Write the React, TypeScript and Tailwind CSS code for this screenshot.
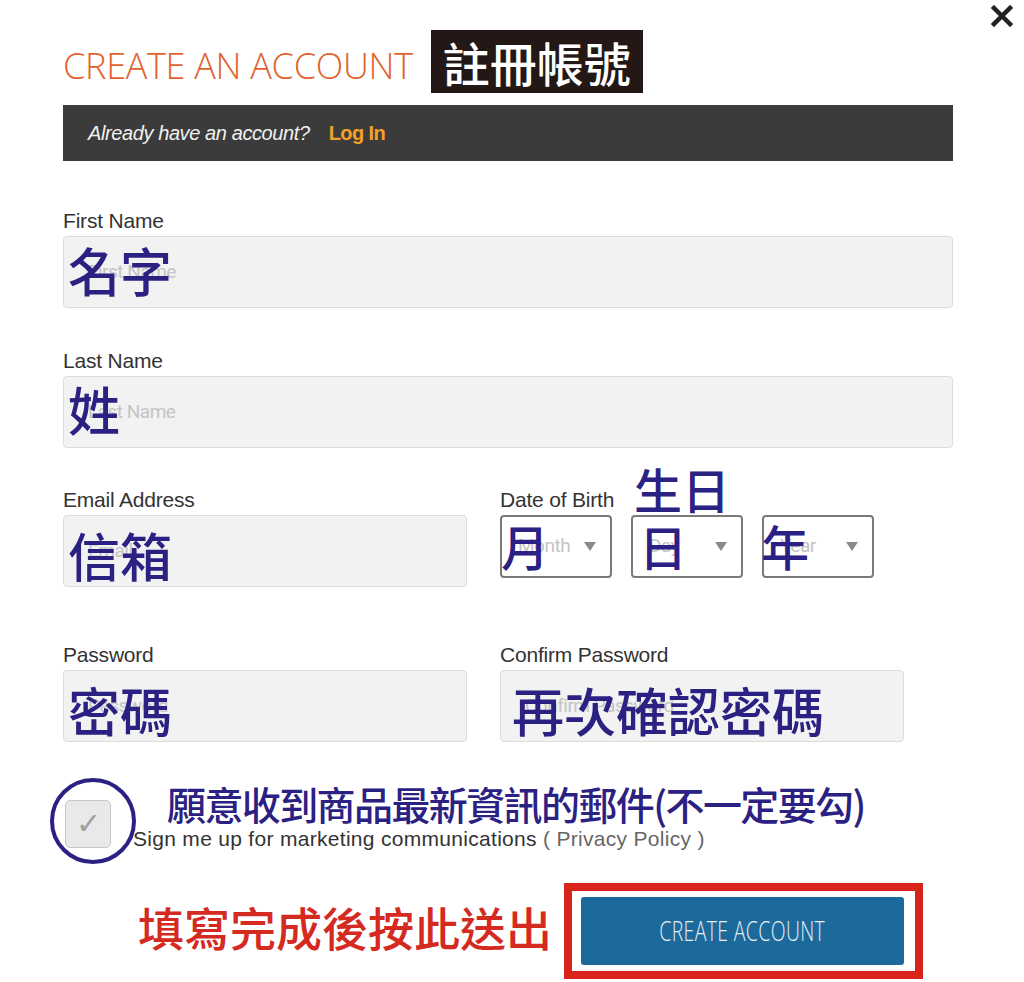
import React from "react";

const sans = { fontFamily: '"Liberation Sans", Arial, sans-serif' };
const cjk = { fontFamily: '"Noto Sans CJK TC", "Noto Sans CJK SC", sans-serif' };

function Label({ children }: { children: React.ReactNode }) {
  return (
    <div className="h-[24px] text-[21px] leading-[24px] text-[#333] tracking-[-0.2px]" style={sans}>
      {children}
    </div>
  );
}

function TextInput({ placeholder, className }: { placeholder: string; className?: string }) {
  return (
    <div
      className={
        "mt-[3px] h-[72px] rounded-[4px] border border-[#dcdcdc] bg-[#f2f2f2] flex items-center pl-[24px] " +
        (className ?? "")
      }
    >
      <span className="text-[19px] text-[#c4c4c4] tracking-[-0.5px]" style={{ fontFamily: "Roboto, sans-serif" }}>
        {placeholder}
      </span>
    </div>
  );
}

function Select({ placeholder }: { placeholder: string }) {
  return (
    <div className="mt-[3px] h-[63px] w-[112px] rounded-[4px] border-2 border-[#7a7a7a] bg-white flex items-center justify-between pl-[16px] pr-[14px]">
      <span className="text-[19px] text-[#c4c4c4] tracking-[-0.5px]" style={{ fontFamily: "Roboto, sans-serif" }}>
        {placeholder}
      </span>
      <svg width="12" height="9" viewBox="0 0 12 9">
        <polygon points="0,0 12,0 6,9" fill="#8a8a8a" />
      </svg>
    </div>
  );
}

function Note({ children, className }: { children: React.ReactNode; className: string }) {
  return (
    <div className={"absolute leading-none text-[#2b2183] font-medium whitespace-nowrap " + className} style={cjk}>
      {children}
    </div>
  );
}

export default function App() {
  return (
    <div className="relative w-[1024px] h-[982px] bg-white overflow-hidden">
      {/* close */}
      <div className="absolute left-[991px] top-[5px]">
        <svg width="22" height="22" viewBox="0 0 22 22">
          <path d="M3 3 L19 19 M19 3 L3 19" stroke="#222" strokeWidth="4.5" strokeLinecap="square" />
        </svg>
      </div>

      <div className="pl-[63px] w-[953px]">
        {/* header */}
        <div className="pt-[30px] flex items-center h-[93px]">
          <div
            className="text-[36px] font-light text-[#e2612c] tracking-[-0.3px] leading-none pt-[8px]"
            style={{ fontFamily: '"Open Sans", sans-serif' }}
          >
            CREATE AN ACCOUNT
          </div>
          <div
            className="ml-[18px] h-[63px] w-[212px] bg-[#231815] text-white text-[47px] leading-none flex items-center justify-center font-medium"
            style={cjk}
          >
            註冊帳號
          </div>
        </div>

        {/* already bar */}
        <div className="mt-[12px] h-[56px] bg-[#3b3b3b] flex items-center pl-[25px]" style={sans}>
          <span className="italic text-[20px] text-[#f0f0f0] tracking-[-0.4px]">Already have an account?</span>
          <span className="ml-[19px] font-bold text-[20px] text-[#f3a127] tracking-[-0.6px]">Log In</span>
        </div>

        {/* first name */}
        <div className="mt-[48px]">
          <Label>First Name</Label>
          <TextInput placeholder="First Name" />
        </div>

        {/* last name */}
        <div className="mt-[41px]">
          <Label>Last Name</Label>
          <TextInput placeholder="Last Name" />
        </div>

        {/* email / dob */}
        <div className="mt-[40px] flex">
          <div className="w-[404px]">
            <Label>Email Address</Label>
            <TextInput placeholder="Email" />
          </div>
          <div className="ml-[33px]">
            <Label>Date of Birth</Label>
            <div className="flex gap-[19px]">
              <Select placeholder="Month" />
              <Select placeholder="Day" />
              <Select placeholder="Year" />
            </div>
          </div>
        </div>

        {/* passwords */}
        <div className="mt-[56px] flex">
          <div className="w-[404px]">
            <Label>Password</Label>
            <TextInput placeholder="Password" />
          </div>
          <div className="ml-[33px] w-[404px]">
            <Label>Confirm Password</Label>
            <TextInput placeholder="Confirm Password" />
          </div>
        </div>

        {/* checkbox */}
        <div className="mt-[58px] flex items-end">
          <div className="ml-[2px] h-[48px] w-[46px] rounded-[5px] border border-[#c8c8c8] bg-[#e9e9e9] flex items-center justify-center text-[#a0a0a0] text-[30px] leading-none" style={sans}>
            ✓
          </div>
          <div className="ml-[22px] mb-[-6px] text-[21px] text-[#333] tracking-[0.3px]" style={sans}>
            Sign me up for marketing communications <span className="text-[#666]">( Privacy Policy )</span>
          </div>
        </div>

        {/* button */}
        <div className="mt-[49px] ml-[518px] w-[323px] h-[68px] rounded-[3px] bg-[#1b6a9b] flex items-center justify-center">
          <span
            className="inline-block text-[27px] text-[#e8eef3] font-light scale-x-[0.72] tracking-[0.5px] whitespace-nowrap"
            style={{ fontFamily: '"Open Sans", sans-serif' }}
          >
            CREATE ACCOUNT
          </span>
        </div>
      </div>

      {/* annotations */}
      <Note className="left-[68px] top-[244px] text-[52px]">名字</Note>
      <Note className="left-[68px] top-[383px] text-[52px]">姓</Note>
      <Note className="left-[68px] top-[529px] text-[52px]">信箱</Note>
      <Note className="left-[634px] top-[464px] text-[48px]">生日</Note>
      <Note className="left-[501px] top-[521px] text-[48px]">月</Note>
      <Note className="left-[639px] top-[521px] text-[48px]">日</Note>
      <Note className="left-[761px] top-[521px] text-[48px]">年</Note>
      <Note className="left-[68px] top-[684px] text-[52px]">密碼</Note>
      <Note className="left-[512px] top-[684px] text-[52px]">再次確認密碼</Note>
      <Note className="left-[167px] top-[784px] text-[39px] tracking-[-1.6px]">願意收到商品最新資訊的郵件(不一定要勾)</Note>
      <div
        className="absolute left-[138px] top-[903px] text-[46px] leading-none text-[#d42a1f] font-medium whitespace-nowrap"
        style={cjk}
      >
        填寫完成後按此送出
      </div>

      {/* circle around checkbox */}
      <div className="absolute left-[50px] top-[778px] w-[86px] h-[86px] rounded-full border-[4px] border-[#2b2183]" />

      {/* red box around button */}
      <div className="absolute left-[564px] top-[883px] w-[359px] h-[96px] border-[8px] border-[#d9231d]" />
    </div>
  );
}
